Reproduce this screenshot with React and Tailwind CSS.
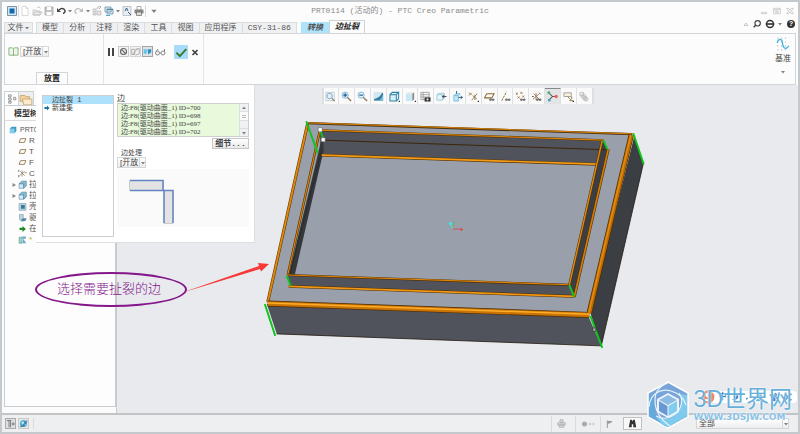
import { useState } from 'react';

const Icon = ({ className = 'h-3 w-3', children, box = '0 0 12 12' }) => (
  <svg viewBox={box} className={`shrink-0 ${className}`} fill="none" aria-hidden="true">
    {children}
  </svg>
);

const Caret = ({ className = 'h-1.5 w-1.5' }) => (
  <Icon className={className} box="0 0 6 6">
    <path d="M1 2h4L3 4.500z" fill="#808080" />
  </Icon>
);

const quickTools = [
  {
    label: '新建',
    art: <path d="M3 1.500h4l2 2v7H3zM7 1.500v2h2" stroke="#d0d0d0" fill="#fff" strokeWidth=".8" />
  },
  {
    label: '打开',
    art: (
      <>
        <path d="M2 10V5h3l1 1h3v4z" stroke="#c2c2c2" fill="#eee" strokeWidth=".8" />
        <path d="M2 10l2-3h7l-2 3zM6 3c1.500-1.500 3-1 3.500.500" stroke="#bbb" strokeWidth=".8" />
      </>
    )
  },
  {
    label: '保存',
    art: (
      <>
        <path d="M2 2h8v8H2z" fill="#c4c4c4" stroke="#aaa" strokeWidth=".8" />
        <path d="M4 2h4v3H4zM3.500 7h5v3h-5z" fill="#fff" />
      </>
    )
  },
  {
    label: '撤消',
    caret: true,
    art: (
      <>
        <path d="M4 5c2-2 5-2 6 .500 .3 1.500-.5 2.500-2 3" stroke="#444" strokeWidth="1.400" />
        <path d="M2 3v4h4z" fill="#444" />
      </>
    )
  },
  {
    label: '重做',
    caret: true,
    art: (
      <>
        <path d="M8 5c-2-2-5-2-6 .500-.3 1.500.5 2.500 2 3" stroke="#bbb" strokeWidth="1.200" />
        <path d="M10 3v4H6z" fill="#bbb" />
      </>
    )
  },
  {
    label: '重新生成',
    art: (
      <>
        <path d="M2 4h3v3H2zM2 8h3v2H2zM6 6h4v4H6z" fill="#e4e4e4" stroke="#b8b8b8" strokeWidth=".7" />
        <path d="M6 4c0-2 2-3 4-2M8 4l2-2" stroke="#aaa" />
      </>
    )
  },
  {
    label: '窗口',
    caret: true,
    art: (
      <>
        <path d="M2 2h6v5H2zM4 4h6v5H4z" fill="#cfe7f3" stroke="#6c95aa" strokeWidth=".8" />
        <path d="M4 4h6v1H4z" fill="#5b7d90" />
        <path d="M3 10.500h4" stroke="#4ab1d8" />
      </>
    )
  },
  {
    label: '关闭窗口',
    art: (
      <>
        <path d="M2 1.500h8v9H2z" fill="#e6eef4" stroke="#b0bbc3" strokeWidth=".8" />
        <path d="M4 6l1.500-3L7 6M7 7l3 3" stroke="#2b4664" strokeWidth=".9" />
      </>
    )
  },
  {
    label: '打印',
    art: (
      <>
        <path d="M4 1.500h4V5H4z" fill="#fff" stroke="#888" strokeWidth=".7" />
        <path d="M1.500 4.500h9v4h-9z" fill="#888" />
        <path d="M3.500 7h5v3.500h-5z" fill="#ddd" stroke="#666" strokeWidth=".7" />
      </>
    )
  }
];

const ribbonTabs = ['模型', '分析', '注释', '渲染', '工具', '视图', '应用程序', 'CSY-31-86'];

const axisCross = <path d="M2 9l7-6M3 3l6 6M5.500 2v8" stroke="#8a7444" strokeWidth=".9" />;
const glasses = (
  <path d="M6 9.500h5M6 9.500a1 1 0 1 0 2 0 1 1 0 1 0-2 0M9 9.500a1 1 0 1 0 2 0 1 1 0 1 0-2 0" stroke="#555" strokeWidth=".8" />
);
const corner = <path d="M12 10v2h-2z" fill="#333" />;

const viewTools = [
  {
    label: '重新调整',
    art: (
      <>
        <path d="M1 1.500h9v9H1z" stroke="#9bb4c4" strokeWidth=".7" />
        <circle cx="5" cy="5.500" r="3" fill="#e1f1fa" stroke="#7ba0b8" />
        <path d="M7.500 8l3 3" stroke="#8f7a5c" strokeWidth="1.300" />
      </>
    )
  },
  {
    label: '放大',
    art: (
      <>
        <circle cx="4.500" cy="4.500" r="3.300" fill="#dff2fc" stroke="#7eb0cf" />
        <path d="M2.500 4.500h4M4.500 2.500v4" stroke="#17598c" strokeWidth="1.200" />
        <path d="M7 7l4 4" stroke="#8f7a5c" strokeWidth="1.500" />
      </>
    )
  },
  {
    label: '缩小',
    art: (
      <>
        <circle cx="4.500" cy="4.500" r="3.300" fill="#dff2fc" stroke="#7eb0cf" />
        <path d="M2.500 4.500h4" stroke="#17598c" strokeWidth="1.200" />
        <path d="M7 7l4 4" stroke="#8f7a5c" strokeWidth="1.500" />
      </>
    )
  },
  {
    label: '重画',
    art: (
      <>
        <path d="M1 2h10v8.500H1z" fill="#3a7ca0" />
        <path d="M1 2h9C8 6 5 8 1 9z" fill="#cfe8f3" />
        <path d="M6 10.500c3-2 4-4 5-7v7z" fill="#73bbd8" />
      </>
    )
  },
  {
    label: '显示样式',
    art: (
      <>
        <path d="M1 4h7v7H1zM1 4l2.500-2.500h7L8 4M10.500 1.500v7L8 11" stroke="#2d83a8" strokeWidth="1.100" fill="#d9eef7" />
        {corner}
      </>
    )
  },
  {
    label: '已保存方向',
    art: (
      <>
        <path d="M1 3h7v8H1z" fill="#c9e7f4" />
        <path d="M1 3l2-1.500h7L8 3z" fill="#e0e0e0" />
        <path d="M8 3l2-1.500V9L8 11z" fill="#8a8a8a" />
        {corner}
      </>
    )
  },
  {
    label: '视图管理器',
    art: (
      <>
        <path d="M1 1.500h9v8H1zM1 4h9M1 6.500h9M3.500 1.500v8" stroke="#999" strokeWidth=".9" />
        <path d="M5 7h6.500v4.500H5z" fill="#333" />
        <circle cx="8.200" cy="9.200" r="1.200" fill="#ddd" />
      </>
    )
  },
  {
    label: '剖面',
    art: (
      <>
        <path d="M1 4l2-1.500h6v5L7 10H1zM1 4h6v6" stroke="#8bbcd2" fill="#e9f5fa" strokeWidth=".8" />
        <path d="M7 6h4.500M9 4.500L7 6l2 1.500" stroke="#345" />
      </>
    )
  },
  {
    label: '透视图',
    art: (
      <>
        <path d="M2 5h5v6H2zM2 5l2-2h5L7 5" stroke="#65b5d6" fill="#bfe6f5" strokeWidth=".8" />
        <path d="M5 0v3M7 7h4M9.500 5.500L11.500 7 9.500 8.500" stroke="#245a78" />
      </>
    )
  },
  {
    label: '基准显示',
    art: (
      <>
        <path d="M1 2l3 2M1 5l3-3M4 10l6-7M5 5l5 4M7.500 4v6" stroke="#8a7444" strokeWidth=".9" />
        {corner}
      </>
    )
  },
  {
    label: '平面显示',
    art: (
      <>
        <path d="M3 3h8L8.500 7.500h-8z" stroke="#8a6a30" strokeWidth="1.100" />
        {glasses}
      </>
    )
  },
  {
    label: '轴显示',
    art: (
      <>
        <path d="M2 10.500L7 1" stroke="#8a6a30" strokeDasharray="2.500 1" />
        {glasses}
      </>
    )
  },
  {
    label: '点显示',
    art: (
      <>
        <path d="M1 2l2 2M3 2L1 4M6 1l2 2M8 1L6 3M3 6l2 2M5 6L3 8M8 5l2 2M10 5L8 7" stroke="#8a6a30" strokeWidth=".9" />
        {glasses}
      </>
    )
  },
  {
    label: '坐标系显示',
    art: (
      <>
        {axisCross}
        <path d="M9 2l1.500 1.500M1 6h2" stroke="#555" />
        {glasses}
      </>
    )
  },
  {
    label: '旋转中心',
    pressed: true,
    art: (
      <>
        <path d="M2 2l4 4-4 4M6 6h4" stroke="#555" strokeWidth="1.100" />
        <circle cx="10" cy="6" r="1.800" fill="#e0675d" />
        <circle cx="2" cy="2" r="1.600" fill="#57ad75" />
        <circle cx="2.500" cy="10" r="1.500" fill="#4ca3c9" />
      </>
    )
  },
  {
    label: '注释显示',
    art: (
      <>
        <path d="M1 2h8v4H1z" fill="#f7f3dd" stroke="#888" strokeWidth=".8" />
        <path d="M5 6l4 4M9.500 6v3M7 10.500h4" stroke="#8a7444" />
        {corner}
      </>
    )
  },
  {
    label: '模拟',
    art: (
      <path d="M1 1.500h4v4H1zM3 4h4v4H3zM5 6h3v4H5zM8 7a2 2 0 1 1 0 4 2 2 0 1 1 0-4" stroke="#b5b5b5" fill="#ececec" strokeWidth=".8" />
    )
  }
];

const plane = <path d="M3.500 3.500h7L8.500 8.500h-7z" stroke="#8a6a40" strokeWidth="1.100" />;
const extrude = (
  <>
    <path d="M1.500 5h6v6h-6z" fill="#d4ebf5" stroke="#5a8ba5" strokeWidth=".8" />
    <path d="M1.500 5L5 1.500h6V8L7.500 11V5z" fill="#82bcd8" stroke="#4c7e99" strokeWidth=".8" />
  </>
);

const treeRows = [
  { name: 'R', art: plane },
  { name: 'T', art: plane },
  { name: 'F', art: plane },
  {
    name: 'C',
    art: (
      <>
        {axisCross}
        <path d="M1 1v3M1 8v3M9 5h2.500" stroke="#555" />
      </>
    )
  },
  { name: '拉', art: extrude, open: true },
  { name: '拉', art: extrude, open: true },
  {
    name: '壳',
    art: (
      <>
        <path d="M1.500 2h9v9h-9z" fill="#b6d6e4" stroke="#84a7b8" />
        <path d="M4 4h5v5H4z" fill="#3f7898" />
      </>
    )
  },
  {
    name: '驱',
    art: (
      <>
        <path d="M2 2h5v7H2z" fill="#bcd2dc" stroke="#7d98a5" strokeWidth=".8" />
        <path d="M5 9c2-4 4 0 6-3v3c-2 3-5 2-8 2z" fill="#4c87a5" />
      </>
    )
  },
  {
    name: '在',
    art: <path d="M2 5h4V2.500L10.500 6.500 6 10.500V8H2z" fill="#1d8a22" />
  },
  {
    name: '*',
    art: (
      <>
        <path d="M1.500 3h4v8h-4z" fill="#9ad4bb" stroke="#5c9a8b" strokeWidth=".8" />
        <path d="M5.500 2h5v3h-5zM7 5l4 6H6z" fill="#6ba9d6" />
      </>
    )
  }
];

const edges = [700, 698, 697, 702];

const Divider = ({ className = 'h-3' }) => <span className={`w-px shrink-0 bg-[#d9dbde] ${className}`} />;

const OpenSelect = ({ id, label, options, className }) => (
  <div className={`relative flex shrink-0 items-center ${className}`}>
    <label htmlFor={id} className="sr-only">
      {label}
    </label>
    <select
      id={id}
      className="h-full w-full appearance-none border border-[#d4d6d8] bg-linear-to-b from-white to-[#ededee] pl-0.5 font-['Liberation_Sans','Noto_Sans_CJK_SC',sans-serif] text-[8px] leading-[9px] text-[#444]"
    >
      {options.map((option) => (
        <option key={option}>{option}</option>
      ))}
    </select>
    <span className="pointer-events-none absolute inset-y-0 right-0 flex w-[7px] items-center justify-center border-l border-[#d4d6d8]">
      <Caret />
    </span>
  </div>
);

const TitleBar = () => (
  <header className="grid h-[18px] shrink-0 grid-cols-[1fr_auto_1fr] items-center">
    <div className="flex items-center pl-1">
      <Icon>
        <path d="M1.500 1.500h9v9h-9z" fill="#d3e7f1" stroke="#7894a5" />
        <path d="M3.500 3.500h5v5h-5z" fill="#1169ad" />
      </Icon>
      <Divider />
      {quickTools.map(({ label, art, caret }) => (
        <button key={label} type="button" aria-label={label} className="flex items-center">
          <Icon>{art}</Icon>
          {caret && <Caret />}
        </button>
      ))}
      <Divider />
      <button type="button" aria-label="自定义快速访问工具栏" className="ml-1">
        <Caret className="h-2 w-2" />
      </button>
    </div>
    <h1 className="text-[8px] leading-3 text-[#8b8b8b]">PRT0114 (活动的) - PTC Creo Parametric</h1>
    <div className="flex items-center justify-end gap-[5px] pr-1">
      <button type="button" aria-label="最小化">
        <Icon className="h-2 w-2">
          <path d="M2 8h8v2H2z" stroke="#bbb" />
        </Icon>
      </button>
      <button type="button" aria-label="还原">
        <Icon className="h-2 w-2">
          <path d="M1 2h10v8H1zM1 4h10M4 6h4v2H4z" stroke="#bbb" />
        </Icon>
      </button>
      <button type="button" aria-label="关闭">
        <Icon className="h-2 w-2">
          <path d="M1 2h3l2 3 2-3h3L8 6l3 4H8L6 7l-2 3H1l3-4z" stroke="#bbb" />
        </Icon>
      </button>
    </div>
  </header>
);

const TabRow = () => (
  <nav className="flex h-[13px] shrink-0 items-end text-[8px] leading-none text-[#555]">
    <button type="button" className="ml-0.5 flex h-[11px] w-[29px] items-center justify-center border border-[#dadde0] bg-[#eff0f2]">
      文件
      <Caret />
    </button>
    <div className="ml-[3px] flex h-[11px] w-[261px] divide-x divide-[#dadde0] border border-b-0 border-[#dadde0] bg-[#eff0f2]">
      {ribbonTabs.map((tab) => (
        <button key={tab} type="button" className="flex-auto whitespace-nowrap">
          {tab}
        </button>
      ))}
    </div>
    <button type="button" className="ml-1 h-[11px] w-7 bg-[#aee4fb] font-bold italic">
      转换
    </button>
    <button type="button" className="relative z-10 h-[13px] w-9 border border-b-0 border-[#d0d3d6] bg-[#fcfcfc] font-bold whitespace-nowrap text-[#222] italic">
      边扯裂
    </button>
    <div className="mb-1 ml-auto flex items-center gap-1 pr-[3px]">
      <button type="button" aria-label="最小化功能区">
        <Icon className="h-1.5 w-1.5" box="0 0 6 6">
          <path d="M1 4.500h4L3 2z" stroke="#bbb" strokeWidth=".8" />
        </Icon>
      </button>
      <button type="button" aria-label="搜索">
        <Icon className="h-2 w-2">
          <circle cx="7" cy="5" r="4" stroke="#444" strokeWidth="1.700" />
          <path d="M4 8l-3 3" stroke="#444" strokeWidth="2.200" />
        </Icon>
      </button>
      <button type="button" aria-label="学习中心" className="flex items-center gap-0.5">
        <Icon className="h-2.5 w-2.5">
          <circle cx="6" cy="6" r="4.200" stroke="#333" strokeWidth="1.800" />
          <path d="M1 5h10v2H1z" fill="#333" />
        </Icon>
        <Caret />
      </button>
      <button
        type="button"
        aria-label="帮助"
        className="h-2 w-2 rounded-full bg-[#333] text-[7px] leading-2 font-bold text-white"
      >
        ?
      </button>
    </div>
  </nav>
);

const Ribbon = () => (
  <section className="mx-0.5 flex h-[52px] shrink-0 border border-[#d3d6d9]">
    <div className="flex w-[99px] shrink-0 flex-col justify-between border-r border-[#e2e4e6]">
      <div className="mt-3 flex items-center gap-px pl-[3px]">
        <Icon className="h-[11px] w-[11px]">
          <path d="M1 2h4l1 1 1-1h4v8H1zM6 3v8" stroke="#83b27b" fill="#f0f3ec" />
        </Icon>
        <OpenSelect id="edge-end" label="边类型" options={['[开放', '盲']} className="h-[11px] w-[29px]" />
      </div>
      <h2 className="ml-[31px] h-3 w-8 border border-b-0 border-[#d3d6d9] text-center text-[8px] leading-3 font-bold text-[#222]">
        放置
      </h2>
    </div>
    <div className="flex w-[100px] shrink-0 items-start gap-px border-r border-[#e2e4e6] pt-3 pl-px">
      <button type="button" aria-label="暂停">
        <Icon>
          <path d="M3 2h2v8H3zM7 2h2v8H7z" fill="#444" />
        </Icon>
      </button>
      <button type="button" aria-label="无预览" className="h-[11px] w-[11px] border border-[#c6c8ca] bg-[#f3f3f3]">
        <Icon className="h-[9px] w-[9px]">
          <circle cx="6" cy="6" r="4" stroke="#666" strokeWidth="1.500" />
          <path d="M3 3l6 6" stroke="#666" strokeWidth="1.500" />
        </Icon>
      </button>
      <button type="button" aria-label="分离预览" className="h-[11px] w-[11px] border border-[#d2d4d6] bg-[#f3f3f3]">
        <Icon className="h-[9px] w-[9px]">
          <path d="M1 3h4v7H1zM6 3l5-1v7l-5 2M2 10l7-8" stroke="#999" />
        </Icon>
      </button>
      <button type="button" aria-label="连接预览" aria-pressed="true" className="h-[11px] w-[11px] border border-[#9fa5aa] bg-[#dfe3e6]">
        <Icon className="h-[9px] w-[9px]">
          <path d="M1 3h4v6H1z" fill="#5fc4ea" />
          <path d="M6 3h5v4L7 10z" fill="#2c92c4" />
        </Icon>
      </button>
      <button type="button" aria-label="校验">
        <Icon>
          <path d="M1.500 7a2 2 0 1 0 4 0 2 2 0 1 0-4 0M7 7a2 2 0 1 0 4 0 2 2 0 1 0-4 0M5.500 7H7M2 6l2-3M10.500 6V3" stroke="#888" />
        </Icon>
      </button>
      <button type="button" aria-label="确定" className="-mt-px ml-[7px] h-3.5 w-3.5 rounded-[1px] bg-[#a6dcfa]">
        <Icon className="h-3.5 w-3.5">
          <path d="M2 6.500l3 3 5.500-6" stroke="#3a7d2c" strokeWidth="1.700" />
        </Icon>
      </button>
      <button type="button" aria-label="取消">
        <Icon>
          <path d="M3.500 4l5 5M8.500 4l-5 5" stroke="#444" strokeWidth="1.700" />
        </Icon>
      </button>
    </div>
    <button type="button" className="ml-auto flex w-6 flex-col items-center pt-[3px] text-[8px] leading-none text-[#444]">
      <Icon className="h-3.5 w-3.5">
        <path d="M1 1h10M1 4.300h10M1 7.600h10M1 11h10" stroke="#b9c3ca" strokeDasharray="1 2.300" />
        <path d="M1 5c1-4 4-4 4.500 0S8 12 11 7.500" stroke="#43b0dc" strokeWidth="1.100" />
      </Icon>
      <span className="mt-1 mb-1.5">基准</span>
      <Caret />
    </button>
  </section>
);

const ModelTree = () => (
  <aside className="flex w-[114px] shrink-0 flex-col bg-[#fbfbfb] pt-[6px] pb-[6px] pl-0.5">
    <div className="flex h-[14px] shrink-0 items-stretch">
      <button type="button" aria-label="模型树" className="w-[15px] border border-b-0 border-[#cfd2d5] bg-white">
        <Icon className="mx-auto h-2.5 w-2.5">
          <path d="M2 1h3v2.500H2zM2 5h3v2.500H2zM2 9h3v2H2zM8 4h2.500v3H8z" stroke="#777" strokeWidth=".9" />
        </Icon>
      </button>
      <button type="button" aria-label="文件夹浏览器" className="w-[15px] border-t border-r border-[#cfd2d5] bg-[#eceef0]">
        <Icon className="mx-auto">
          <path d="M1 3h4l1 1h3v4H1z" fill="#f1d3a2" stroke="#c6a06a" strokeWidth=".7" />
          <path d="M3 6h8v5H4z" fill="#fbeacb" stroke="#c6a06a" strokeWidth=".7" />
        </Icon>
      </button>
    </div>
    <div className="flex-1 border border-[#c8ccd0] bg-[#fdfdfd]">
      <h2 className="h-[15px] border-b border-[#d8dadd] pl-[9px] text-[8px] leading-[15px] font-bold text-[#333]">模型树</h2>
      <ul className="pt-[3px] font-['Liberation_Sans','Noto_Sans_CJK_SC',sans-serif] text-[8px] leading-[11px] text-[#555]">
        <li className="flex items-center gap-[3px] pl-1 text-[7px]">
          <Icon className="h-2 w-2">
            <path d="M1 4h7v7H1z" fill="#80cdec" />
            <path d="M1 4l3-3h7v7l-3 3V4z" fill="#3c9ac4" />
          </Icon>
          PRT0
        </li>
        {treeRows.map(({ name, art, open }, index) => (
          <li key={index} className="flex items-center pl-[6px]">
            <span className="flex w-[7px]">
              {open && (
                <Icon className="h-1.5 w-1.5" box="0 0 6 6">
                  <path d="M1.500 1v4L5 3z" fill="#888" />
                </Icon>
              )}
            </span>
            <Icon className="mr-[2px] h-[9px] w-[9px]">{art}</Icon>
            <span className={name === '*' ? 'text-[#b3ab22]' : ''}>{name}</span>
          </li>
        ))}
      </ul>
    </div>
  </aside>
);

const ViewToolbar = () => (
  <div className="mx-auto mt-[3px] flex h-4 w-[272px] shrink-0 divide-x divide-[#dfe1e4] border-x-2 border-[#dcdee1] bg-[#fafafa]">
    {viewTools.map(({ label, art, pressed }) => (
      <button
        key={label}
        type="button"
        aria-label={label}
        className={`flex flex-1 items-center justify-center ${pressed ? 'border-t border-t-[#888] bg-[#e2e4e6]' : ''}`}
      >
        <Icon className="h-[11px] w-[11px]">{art}</Icon>
      </button>
    ))}
  </div>
);

const Model = () => (
  <svg viewBox="116 104 682 309" className="min-h-0 w-full flex-1" role="img" aria-label="PRT0114" fill="none">
    <path d="M307 123L632 134 588 314 266 303z" fill="#99a0ab" />
    <path d="M266 304L588 316 601 346 276 334z" fill="#50535b" />
    <path d="M634 136L643 164 601 346 590 313z" fill="#3b3e42" />
    <path d="M643 164L601 346 276 334" stroke="#251a10" strokeWidth=".8" />

    {/* outer bevels */}
    <path d="M307 123L632 134" stroke="#3f2a10" strokeWidth="2.200" />
    <path d="M307 122.600L632 133.700" stroke="#cf7c06" strokeWidth="1.200" />
    <path d="M307 123L267 302" stroke="#5b3706" strokeWidth="3" />
    <path d="M307 123L267 302" stroke="#e28708" strokeWidth="1.900" />
    <path d="M267 303.500L589 315" stroke="#4d2c03" strokeWidth="6" />
    <path d="M267 303.500L589 315" stroke="#c97405" strokeWidth="4.600" />
    <path d="M267 303L589 314.300" stroke="#ffac29" strokeWidth="1.500" />
    <path d="M631 135L589 313" stroke="#4d2c03" strokeWidth="5.400" />
    <path d="M631 135L589 313" stroke="#bd6c04" strokeWidth="4" />
    <path d="M630.500 135L588.500 313" stroke="#e98e0c" strokeWidth="1.400" />

    {/* pocket walls */}
    <path d="M319 130L603 140 596 165 320 156z" fill="#50535b" />
    <path d="M322 134L323 150 294 275 288 275z" fill="#35383b" />
    <path d="M287 275L568 285 573 297 289 287z" fill="#50535b" />
    <path d="M603 140L608 150 574 297 569 285z" fill="#3b3e42" />
    <path d="M323 140L605 149.500" stroke="#3c2508" strokeWidth="1" />
    <path d="M319 130L603 140" stroke="#4d2c03" strokeWidth="2" />
    <path d="M319 130L603 140" stroke="#d58007" strokeWidth="1.200" />
    <path d="M321 155L596 164.300" stroke="#5b3706" strokeWidth="2.800" />
    <path d="M321 155L596 164" stroke="#f39b14" strokeWidth="1.700" />
    <path d="M319 131L287 275" stroke="#4d2c03" strokeWidth="2.300" />
    <path d="M319 131L287 275" stroke="#dd8306" strokeWidth="1.200" />
    <path d="M321 150L289 275" stroke="#222" strokeWidth=".6" />
    <path d="M287 275L569 285" stroke="#4d2c03" strokeWidth="2.200" />
    <path d="M287 275L569 284.800" stroke="#dd8306" strokeWidth="1.200" />
    <path d="M288 286.500L574 296.500" stroke="#4d2c03" strokeWidth="2.800" />
    <path d="M288 286.500L574 296.500" stroke="#f09610" strokeWidth="1.700" />
    <path d="M602 140L569 285" stroke="#4d2c03" strokeWidth="2.400" />
    <path d="M602 140L569 285" stroke="#e58908" strokeWidth="1.400" />
    <path d="M608 149L574 297" stroke="#4d2c03" strokeWidth="2.800" />
    <path d="M608 149L574 297" stroke="#d47c04" strokeWidth="1.700" />

    {/* selected edges */}
    <path
      d="M305.500 121L317 153M633 133L643.500 164M264 304L274.500 336M590 316L602 348M319 130l4 9M603 140l4 9M286 276l4 10M569 285l5 12"
      stroke="#0dc41a"
      strokeWidth="1.900"
    />
    <path d="M317.500 127.500h4v4h-4zM320.500 137.500h4v4h-4z" fill="#fff" stroke="#555" strokeWidth=".5" />
    <path d="M592.500 328h3v3.500h-3z" fill="#aaa" stroke="#333" strokeWidth=".7" />

    {/* spin centre */}
    <path d="M452 229h8" stroke="#d34f55" />
    <path d="M452 228l2-7" stroke="#48ca4c" />
    <path d="M450 224l2 5" stroke="#4fdbe2" />
    <circle cx="450" cy="223.500" r="1.600" fill="#45e0e8" />
    <circle cx="461" cy="229.500" r="1.200" fill="#df4348" />
  </svg>
);

const PlacementPanel = () => {
  const [current, setCurrent] = useState(0);

  return (
    <section className="absolute top-0 left-[34px] flex w-[219px] gap-[3px] border-r border-b border-[#dcdee1] bg-white pt-[10px] pr-[5px] pb-[5px] pl-[6px] text-[#444]">
      <ul className="w-[72px] shrink-0 border border-[#ccced0] text-[7px] leading-none">
        {['边扯裂 1', '新建集'].map((name, index) => (
          <li key={name}>
            <button
              type="button"
              onClick={() => setCurrent(index)}
              className={`flex h-2 w-full items-center gap-px pl-px ${current === index ? 'bg-[#aee1fb]' : ''}`}
            >
              <span className="w-[7px]">
                {index === 1 && (
                  <Icon className="h-1.5 w-1.5">
                    <path d="M1 4h5V1l5 5-5 5V8H1z" fill="#17759f" />
                  </Icon>
                )}
              </span>
              {name}
            </button>
          </li>
        ))}
      </ul>
      <div className="min-w-0 flex-1 pb-[10px] text-[7px] leading-none">
        <h3 className="h-2 text-[8px] leading-2">边</h3>
        <div className="flex justify-between border border-[#ccced0] bg-[#e8fadb]">
          <ul className="pl-[3px] font-['Liberation_Serif','Noto_Sans_CJK_SC',serif] leading-2">
            {edges.map((id) => (
              <li key={id}>边:F8(驱动曲面_1) ID={id}</li>
            ))}
          </ul>
          <div className="flex w-[9px] flex-col justify-between border-l border-[#dcdee0] bg-[#f0f1f3]">
            <button type="button" aria-label="向上滚动" className="flex h-2 items-center justify-center border-b border-[#dcdee0]">
              <Caret className="h-1.5 w-1.5 rotate-180" />
            </button>
            <span className="mb-auto flex h-[9px] flex-col items-center justify-center gap-px border-b border-[#dcdee0] bg-[#fafafa]">
              <span className="h-px w-1 bg-[#bbb]" />
              <span className="h-px w-1 bg-[#bbb]" />
            </span>
            <button type="button" aria-label="向下滚动" className="flex h-2 items-center justify-center border-t border-[#dcdee0]">
              <Caret />
            </button>
          </div>
        </div>
        <button
          type="button"
          className="mt-px ml-auto block h-[11px] w-[37px] border border-[#c5c7c9] bg-linear-to-b from-white to-[#e9e9ea] text-[8px] leading-none font-bold"
        >
          细节...
        </button>
        <h3 className="h-2 pl-1 leading-2">边处理</h3>
        <OpenSelect id="edge-treatment" label="边处理" options={['[开放', '盲']} className="h-[11px] w-[29px]" />
        <svg viewBox="0 0 132 58" className="mt-px w-full bg-[#fafafa]" fill="none" role="img" aria-label="开放">
          <path d="M12.500 11.500h34v10h-34zM47 21.500h9v33h-9z" fill="#e3e3e4" stroke="#c0c2c8" strokeWidth=".8" />
          <path d="M13 11.500h33v10H13M47 54V21.500h9V54" stroke="#6385c4" strokeWidth="1.500" />
        </svg>
      </div>
    </section>
  );
};

const Callout = () => (
  <div className="pointer-events-none absolute top-[187px] left-[33px] flex items-start">
    <p className="flex h-[35px] w-[152px] items-center justify-center rounded-[50%] border-2 border-[#84178a] pr-1 text-[13px] font-light whitespace-nowrap text-[#84178a]">
      选择需要扯裂的边
    </p>
    <svg viewBox="0 0 88 32" className="-mt-2.5 -ml-1.5 h-8 w-[88px]" fill="#f93838" aria-hidden="true">
      <path d="M0 31L78 4l-1-3 11 1-8 7.500-1-2.500z" />
    </svg>
  </div>
);

const Watermark = () => (
  <div className="pointer-events-none absolute right-1.5 bottom-[3px] flex items-center gap-1">
    <svg viewBox="0 0 44 48" className="h-12 w-11" fill="none" aria-hidden="true">
      <path d="M22 1L42 12v24L22 47 2 36V12z" fill="#78a4da" stroke="#fff" strokeWidth="1.500" />
      <path d="M41 14v21L22 46c-7-2-11-6-12-11 8 6 20 3 24-7 2-5 2-10-1-15z" fill="#7fcbee" />
      <path d="M3 14v21l19 11C12 42 6 32 9 20z" fill="#62a9dc" />
      <path
        d="M3 26C4 13 14 7 25 10c8 2 13 8 15 14M22 2C14 5 9 10 9 19c0 12 6 20 15 26M10 35c9 5 20 1 24-8 3-7 2-11-1-15"
        stroke="#e4f3fb"
        strokeWidth="1.200"
      />
      <path d="M22 12l11 6v13l-11 6-11-6V18z" fill="#eef4fa" />
      <path d="M22 14l9 5-9 5-9-5z" fill="#8abbe3" />
      <path d="M13 20l8.500 5v10L13 30z" fill="#6997d2" />
      <path d="M31 20l-8.500 5v10L31 30z" fill="#80cdee" />
    </svg>
    <div className="relative">
      <div className="absolute top-1 left-[7px] flex h-3 items-center gap-1 rounded-sm bg-white pr-1 text-[8px] leading-none font-bold text-[#2f77c4]">
        <Icon className="h-3.5 w-3.5">
          <circle cx="6" cy="6" r="5.500" fill="#f2825f" />
          <path d="M8.500 3.500C5 2 3 4.500 6 5.800S8 9.500 3.500 8.500" stroke="#fff" strokeWidth="1.500" />
        </Icon>
        <span>中</span>
        <Icon className="h-2 w-2">
          <path d="M8 1c1 4-2 8-7 8 4 3 10 1 10-4 0-2-1-3-3-4z" fill="#2f77c4" />
        </Icon>
        <Icon className="h-2 w-2">
          <path d="M5 7h3l-3 4z" fill="#2f77c4" />
        </Icon>
        <Icon className="h-2.5 w-2.5">
          <circle cx="6" cy="4" r="2.500" fill="#68b3db" />
          <path d="M1 11c1-5 9-5 10 0z" fill="#68b3db" />
        </Icon>
        <Icon className="h-2.5 w-2.5">
          <path d="M1 2l3 2 4-3 3 3-3 1v6H4V6L1 5z" fill="#2f77c4" />
        </Icon>
        <Icon className="h-2.5 w-2.5">
          <path d="M2 2l8 8M10 2L2 10" stroke="#2f77c4" strokeWidth="2" />
        </Icon>
      </div>
      <p className="relative font-['Liberation_Sans','Noto_Sans_CJK_SC',sans-serif] text-[23px] leading-6 whitespace-nowrap text-[#65afd9] [text-shadow:0_0_2px_#fff,0_0_1px_#fff]">
        3D世界网
      </p>
      <p className="relative font-['DejaVu_Sans',sans-serif] text-[9px] leading-3 font-bold whitespace-nowrap text-[#8cc3e4] [text-shadow:0_0_2px_#fff,0_0_1px_#fff]">
        WWW.3DSJW.COM
      </p>
    </div>
  </div>
);

const StatusBar = () => (
  <footer className="flex h-[19px] shrink-0 items-center border-t-2 border-[#c1c3c5] bg-[#eeeff1] pr-[9px] pl-[3px]">
    <button type="button" aria-label="显示导航器" className="flex h-[11px] w-[11px] items-center justify-center border border-[#aaadb0] bg-[#dedfe1]">
      <Icon className="h-[9px] w-[9px]">
        <path d="M1 2h6M4 2v9M6 11V2" stroke="#666" />
        <circle cx="9.500" cy="6.500" r="1.500" stroke="#666" />
      </Icon>
    </button>
    <button type="button" aria-label="显示浏览器" className="ml-0.5 flex h-[11px] w-[11px] items-center justify-center border border-[#c8cacc] bg-[#e6e7e9]">
      <Icon className="h-[9px] w-[9px]">
        <circle cx="6" cy="6" r="4.500" fill="#2e9aca" />
        <path d="M3 4l3-1 1 2-3 3zM7 7l3-1-2 3z" fill="#c3ecf7" />
        <path d="M1 10C4 12 12 4 10.500 1.500" stroke="#557" />
      </Icon>
    </button>
    <Divider className="ml-1 h-[11px]" />
    <div className="ml-auto flex items-center gap-[5px]">
      <Divider className="h-4" />
      <button type="button" aria-label="打印状态">
        <Icon className="h-[9px] w-[9px]">
          <path d="M4 1h4v4H4zM1 5h10v3H1zM3 8h6v3H3z" stroke="#aaa" fill="#ddd" />
        </Icon>
      </button>
      <Divider className="ml-1 h-4" />
      <Icon className="h-2 w-3.5" box="0 0 14 8">
        <circle cx="3.500" cy="4" r="2.500" fill="#aaa" />
        <circle cx="9" cy="4" r="1.300" fill="#ccc" />
        <circle cx="12.500" cy="4" r="1.200" fill="#ccc" />
      </Icon>
      <Divider className="h-4" />
      <Icon className="h-2 w-2">
        <path d="M2 1v11" stroke="#999" strokeWidth="1.500" />
        <path d="M2 1l8 1-3 2.500L2 6z" fill="#999" />
      </Icon>
      <button type="button" aria-label="查找" className="ml-1 flex h-[13px] w-[19px] items-center justify-center border border-[#bfc1c3] bg-[#f8f8f8]">
        <Icon className="h-[9px] w-[9px]">
          <path d="M3 1h2l1 2 1-2h2l2 10H7V7H5v4H1z" fill="#333" />
        </Icon>
      </button>
    </div>
    <OpenSelect id="filter" label="选择过滤器" options={['全部', '几何', '基准']} className="ml-[54px] h-[11px] w-[93px]" />
  </footer>
);

function App() {
  return (
    <div className="relative flex h-screen flex-col overflow-hidden border-2 border-[#c4c9cd] bg-[#fcfcfc] font-['Liberation_Mono','Noto_Sans_CJK_SC',monospace]">
      <TitleBar />
      <TabRow />
      <Ribbon />
      <main className="relative flex min-h-0 flex-1">
        <ModelTree />
        <div className="flex min-w-0 flex-1 flex-col border-l border-[#c8ccd0] bg-[#e8eaee]">
          <ViewToolbar />
          <Model />
        </div>
        <PlacementPanel />
        <Callout />
      </main>
      <StatusBar />
      <Watermark />
    </div>
  );
}

export default App;
